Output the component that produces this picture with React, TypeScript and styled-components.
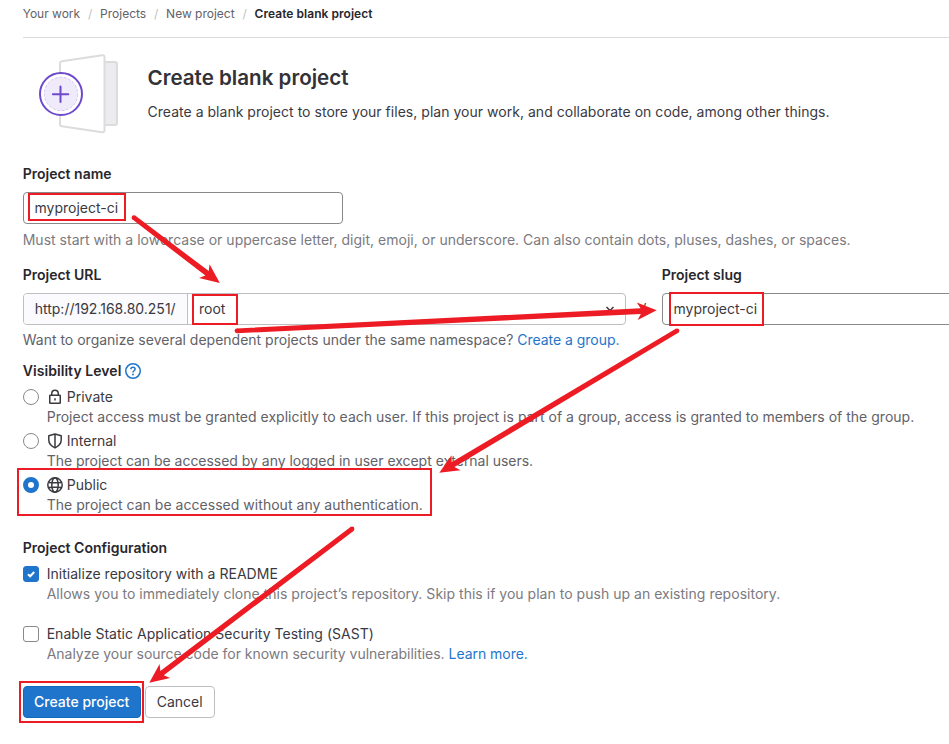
import React from "react";
import styled, { createGlobalStyle, css } from "styled-components";

const GlobalStyle = createGlobalStyle`
  *, *::before, *::after { box-sizing: border-box; }
  body {
    margin: 0;
    overflow: hidden;
    background: #fff;
    color: #3a393f;
    font-family: Inter, "Liberation Sans", sans-serif;
    font-size: 14px;
    line-height: 20px;
  }
`;

const Page = styled.main`
  position: relative;
  width: 100%;
  height: 744px;
  padding-left: 22.7px;
  overflow: hidden;
  white-space: nowrap;
`;

const Breadcrumbs = styled.nav`
  display: flex;
  align-items: center;
  height: 38px;
  padding-bottom: 10px;
  border-bottom: 1px solid #dcdcde;
  font-size: 12px;
  line-height: 16px;
`;
const Crumb = styled.a<{ $current?: boolean }>`
  color: ${(p) => (p.$current ? "#28272d" : "#626168")};
  font-weight: ${(p) => (p.$current ? 600 : 400)};
  letter-spacing: ${(p) => (p.$current ? 0.04 : -0.01)}px;
  &:not(:first-child)::before {
    content: "/";
    display: inline-block;
    width: 20px;
    text-align: center;
    color: #bfbfc3;
    font-weight: 400;
  }
`;

const Hero = styled.header`
  display: flex;
  height: 127px;
`;
const HeroArt = styled.svg`
  flex: none;
  width: 84px;
  height: 82px;
  margin: 15px 0 0 13.3px;
`;
const HeroText = styled.div`
  padding: 26px 0 0 27.5px;
`;
const Title = styled.h1`
  margin: 0 0 8px;
  color: #333238;
  font-size: 20.6px;
  font-weight: 600;
  line-height: 28px;
`;
const Paragraph = styled.p<{ $tracking?: number }>`
  margin: 0;
  line-height: 24px;
  letter-spacing: ${(p) => p.$tracking ?? 0}px;
`;

const Label = styled.div`
  display: flex;
  align-items: center;
  gap: 4px;
  height: 20px;
  color: #28272d;
  font-weight: 600;
`;
const Help = styled.div<{ $tracking?: number; $strong?: boolean }>`
  height: 20px;
  color: ${(p) => (p.$strong ? "#626168" : "#7b7a80")};
  letter-spacing: ${(p) => p.$tracking ?? 0}px;
`;
const Link = styled.a`
  color: #1f75cb;
  letter-spacing: -0.03px;
`;

const field = css`
  display: flex;
  align-items: center;
  height: 32px;
  border: 1px solid #89888d;
  border-radius: 4px;
  background: #fff;
`;
const Field = styled.div<{ $width: number }>`
  ${field}
  width: ${(p) => p.$width}px;
  padding-left: 10.8px;
`;
const NameGroup = styled.section`
  display: flex;
  flex-direction: column;
  height: 101px;
  ${Label} { margin-bottom: 8px; margin-top: -1px; }
  ${Help} { margin-top: 6px; }
`;
const PathRow = styled.section`
  display: flex;
  height: 65px;
  margin-top: -1px;
`;
const Column = styled.div<{ $width: number }>`
  flex: none;
  width: ${(p) => p.$width}px;
  ${Label} { margin-bottom: 8px; }
`;
const Separator = styled.div`
  flex: none;
  width: 36px;
  padding-top: 34px;
  text-align: center;
`;
const UrlField = styled.div`
  ${field}
  border-color: #bfbfc3;
  overflow: hidden;
`;
const Prefix = styled.span`
  display: flex;
  align-items: center;
  width: 164.3px;
  height: 100%;
  padding-left: 11px;
  border-right: 1px solid #bfbfc3;
  background: #fbfafd;
`;
const Namespace = styled.span`
  display: flex;
  flex: 1;
  align-items: center;
  justify-content: space-between;
  padding: 0 7px 0 11px;
`;

const Visibility = styled.section`
  padding-top: 11px;
`;
const VisibilityLabel = styled(Label)`
  letter-spacing: 0.06px;
`;
const Options = styled.div`
  padding-top: 6px;
`;
const Option = styled.div<{ $height: number }>`
  display: grid;
  grid-template-columns: 24px auto;
  grid-template-rows: 20px 20px;
  align-items: center;
  justify-content: start;
  height: ${(p) => p.$height}px;
  ${Help} { grid-column: 2; }
`;
const OptionTitle = styled.span`
  display: flex;
  align-items: center;
  gap: 4px;
  letter-spacing: 0.02px;
`;
const Radio = styled.span<{ $checked?: boolean }>`
  width: 16px;
  height: 16px;
  border: ${(p) => (p.$checked ? "5px solid #1f75cb" : "1px solid #89888d")};
  border-radius: 50%;
  background: #fff;
`;
const Checkbox = styled.span<{ $checked?: boolean }>`
  display: flex;
  width: 16px;
  height: 16px;
  border: 1px solid ${(p) => (p.$checked ? "#1f75cb" : "#89888d")};
  border-radius: 3px;
  background: ${(p) => (p.$checked ? "#1f75cb" : "#fff")};
`;
const Icon = styled.svg`
  flex: none;
  width: 16px;
  height: 16px;
  fill: none;
  stroke: currentColor;
  stroke-width: 1.5;
`;
const InfoIcon = styled(Icon)`
  color: #1f75cb;
`;
const Configuration = styled.section`
  padding-top: 19px;
`;
const Actions = styled.footer`
  display: flex;
  gap: 4px;
  padding-top: 2px;
`;
const Button = styled.button<{ $primary?: boolean }>`
  width: ${(p) => (p.$primary ? 118 : 70)}px;
  height: 32px;
  padding: 0;
  border: 1px solid ${(p) => (p.$primary ? "#1068bf" : "#bfbfc3")};
  border-radius: 4px;
  background: ${(p) => (p.$primary ? "#1f75cb" : "#fff")};
  color: ${(p) => (p.$primary ? "#fff" : "#3a393f")};
  font: ${(p) => (p.$primary ? 500 : 400)} 14px/20px Inter, "Liberation Sans", sans-serif;
`;

const Annotations = styled.svg`
  position: absolute;
  top: 0;
  left: 0;
  width: 949px;
  height: 744px;
  pointer-events: none;
`;

const RED = "#ed1c24";

type Segment = [number, number, number, number];
const arrows: Segment[] = [
  [134, 217.7, 219.8, 283],
  [237, 330.8, 656.7, 310.3],
  [677, 330.8, 439.3, 472.8],
  [352, 529, 149.3, 682.8],
];
const frames: Segment[] = [
  [28, 193, 126, 221],
  [192, 294, 238, 325],
  [669, 292, 764, 326],
  [17, 468, 432, 516],
  [19, 681, 144, 723],
];

const Arrow = ({ line: [x1, y1, x2, y2] }: { line: Segment }) => {
  const length = Math.hypot(x2 - x1, y2 - y1);
  const ux = (x2 - x1) / length;
  const uy = (y2 - y1) / length;
  const at = (back: number, side: number) =>
    `${x2 - ux * back - uy * side},${y2 - uy * back + ux * side}`;
  return (
    <g fill={RED}>
      <circle cx={x1} cy={y1} r={2.4} />
      <polygon
        points={[
          `${x1 - uy * 2.4},${y1 + ux * 2.4}`,
          at(16, 2.8),
          at(19.5, 8.7),
          at(0, 0),
          at(19.5, -8.7),
          at(16, -2.8),
          `${x1 + uy * 2.4},${y1 - ux * 2.4}`,
        ].join(" ")}
      />
    </g>
  );
};

const BlankProjectArt = () => (
  <HeroArt viewBox="36 53 84 82" fill="none">
    <rect x="103" y="62" width="14" height="63" rx="2" fill="#ececef" stroke="#dcdcde" strokeWidth="2" />
    <path
      d="M60 63.2Q60 61.5 61.8 61.2L102.2 55.2Q104.5 54.9 104.5 57.2V130.2Q104.5 132.5 102.2 132.2L61.8 126.2Q60 126 60 124.2Z"
      fill="#fff" stroke="#dcdcde" strokeWidth="2"
    />
    <circle cx="61" cy="94" r="21" fill="#fff" stroke="#6e49cb" strokeWidth="2" />
    <circle cx="61" cy="94" r="16.7" fill="#f0ebfa" stroke="#cbbcf0" strokeWidth="0.8" strokeDasharray="3 1.5" />
    <path d="M52.9 94.3H68.3M60.5 86.6V102" stroke="#6e49cb" strokeWidth="2" strokeLinecap="round" />
  </HeroArt>
);

const LockIcon = () => (
  <Icon viewBox="0 0 16 16">
    <rect x="2.75" y="6.25" width="10.5" height="8" rx="0.6" />
    <path d="M4.75 6.5V4.4a3.25 3.25 0 0 1 6.5 0V6.5M8 9.2v2.3" />
  </Icon>
);
const ShieldIcon = () => (
  <Icon viewBox="0 0 16 16">
    <path d="M8 1.1L14.2 2.7V7.1C14.2 10.7 11.7 13.2 8 14.9C4.3 13.2 1.8 10.7 1.8 7.1V2.7Z" strokeLinejoin="round" />
    <path d="M8 1.5V14.5" />
  </Icon>
);
const GlobeIcon = () => (
  <Icon viewBox="0 0 16 16">
    <circle cx="8" cy="8" r="7.2" />
    <ellipse cx="8" cy="8" rx="3.2" ry="7.2" />
    <path d="M1.3 5.4Q8 6.1 14.7 5.4M1.3 10.6Q8 9.9 14.7 10.6" />
  </Icon>
);

const visibilityLevels = [
  {
    name: "Private",
    icon: <LockIcon />,
    tracking: 0.015,
    help: "Project access must be granted explicitly to each user. If this project is part of a group, access is granted to members of the group.",
  },
  {
    name: "Internal",
    icon: <ShieldIcon />,
    tracking: -0.025,
    help: "The project can be accessed by any logged in user except external users.",
  },
  {
    name: "Public",
    icon: <GlobeIcon />,
    tracking: 0.03,
    checked: true,
    help: "The project can be accessed without any authentication.",
  },
];

export default function App() {
  return (
    <>
      <GlobalStyle />
      <Page>
        <Breadcrumbs>
          <Crumb>Your work</Crumb>
          <Crumb>Projects</Crumb>
          <Crumb>New project</Crumb>
          <Crumb $current>Create blank project</Crumb>
        </Breadcrumbs>

        <Hero>
          <BlankProjectArt />
          <HeroText>
            <Title>Create blank project</Title>
            <Paragraph $tracking={0.026}>
              Create a blank project to store your files, plan your work, and collaborate on code, among other things.
            </Paragraph>
          </HeroText>
        </Hero>

        <NameGroup>
          <Label>Project name</Label>
          <Field $width={320}>myproject-ci</Field>
          <Help $tracking={0.015}>
            Must start with a lowercase or uppercase letter, digit, emoji, or underscore. Can also contain dots, pluses, dashes, or spaces.
          </Help>
        </NameGroup>

        <PathRow>
          <Column $width={603}>
            <Label>Project URL</Label>
            <UrlField>
              <Prefix>http://192.168.80.251/</Prefix>
              <Namespace>
                root
                <Icon viewBox="0 0 16 16"><path d="M4.5 6L8 9.5L11.5 6" /></Icon>
              </Namespace>
            </UrlField>
          </Column>
          <Separator>/</Separator>
          <Column $width={320}>
            <Label>Project slug</Label>
            <Field $width={320}>myproject-ci</Field>
          </Column>
        </PathRow>
        <Help $strong>
          Want to organize several dependent projects under the same namespace? <Link>Create a group.</Link>
        </Help>

        <Visibility>
          <VisibilityLabel>
            Visibility Level
            <InfoIcon viewBox="0 0 16 16">
              <circle cx="8" cy="8" r="7.25" />
              <path d="M5.9 6.3C5.9 5 6.8 4.2 8 4.2s2.1.8 2.1 2c0 1.5-2.1 1.6-2.1 3.2" />
              <circle cx="8" cy="11.5" r="0.95" fill="currentColor" stroke="none" />
            </InfoIcon>
          </VisibilityLabel>
          <Options>
            {visibilityLevels.map((level) => (
              <Option key={level.name} $height={44}>
                <Radio $checked={level.checked} />
                <OptionTitle>{level.icon}{level.name}</OptionTitle>
                <Help $strong $tracking={level.tracking}>{level.help}</Help>
              </Option>
            ))}
          </Options>
        </Visibility>

        <Configuration>
          <Label>Project Configuration</Label>
          <Options>
            <Option $height={60}>
              <Checkbox $checked>
                <svg width="14" height="14" viewBox="0 0 14 14" fill="none" stroke="#fff" strokeWidth="2">
                  <path d="M4 7.2L6.2 9.3L10.2 5" />
                </svg>
              </Checkbox>
              <OptionTitle>Initialize repository with a README</OptionTitle>
              <Help $tracking={0.022}>
                Allows you to immediately clone this project’s repository. Skip this if you plan to push up an existing repository.
              </Help>
            </Option>
            <Option $height={60}>
              <Checkbox />
              <OptionTitle>Enable Static Application Security Testing (SAST)</OptionTitle>
              <Help $tracking={-0.025}>
                Analyze your source code for known security vulnerabilities. <Link>Learn more.</Link>
              </Help>
            </Option>
          </Options>
        </Configuration>

        <Actions>
          <Button $primary>Create project</Button>
          <Button>Cancel</Button>
        </Actions>

        <Annotations viewBox="0 0 949 744">
          {frames.map(([left, top, right, bottom]) => (
            <rect
              key={`${left}-${top}`}
              x={left + 1} y={top + 1} width={right - left - 2} height={bottom - top - 2}
              fill="none" stroke={RED} strokeWidth="2"
            />
          ))}
          {arrows.map((line) => <Arrow key={line.join()} line={line} />)}
        </Annotations>
      </Page>
    </>
  );
}
